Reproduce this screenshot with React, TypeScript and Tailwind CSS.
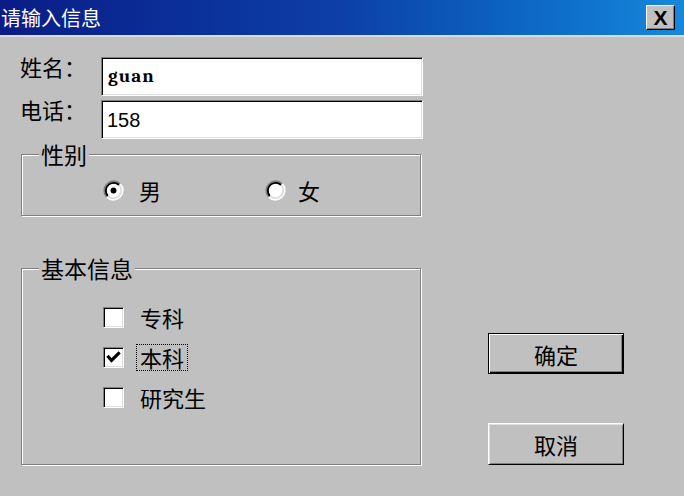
import React, { useState } from 'react';

const cjk = "font-[family-name:'Noto_Sans_CJK_SC','Noto_Sans',sans-serif]";

const sunken =
  'border border-t-[#808080] border-l-[#808080] border-b-white border-r-white shadow-[inset_1px_1px_0_#000,inset_-1px_-1px_0_#dfdfdf]';

const Radio: React.FC<{ checked: boolean }> = ({ checked }) => (
  <svg width="21" height="21" viewBox="0 0 20 20" className="shrink-0">
    <circle cx="10" cy="10" r="7" fill="#fff" />
    <path d="M3.64 16.36 A9 9 0 0 1 16.36 3.64" fill="none" stroke="#808080" strokeWidth="1.8" />
    <path d="M16.36 3.64 A9 9 0 0 1 3.64 16.36" fill="none" stroke="#fff" strokeWidth="1.8" />
    <path d="M4.7 15.3 A7.5 7.5 0 0 1 15.3 4.7" fill="none" stroke="#000" strokeWidth="1.8" />
    <path d="M15.3 4.7 A7.5 7.5 0 0 1 4.7 15.3" fill="none" stroke="#dfdfdf" strokeWidth="1.8" />
    {checked && <circle cx="10" cy="10" r="2.8" fill="#000" />}
  </svg>
);

const Check: React.FC<{ checked: boolean }> = ({ checked }) => (
  <div className={`w-[21px] h-[21px] bg-white shrink-0 flex items-center justify-center ${sunken}`}>
    {checked && (
      <svg width="15" height="15" viewBox="0 0 15 15">
        <path d="M2.5 7 L5.5 10.5 L12.5 3.5" fill="none" stroke="#000" strokeWidth="3.2" strokeLinecap="square" />
      </svg>
    )}
  </div>
);

const Group: React.FC<{ title: string; className: string; children: React.ReactNode }> = ({ title, className, children }) => (
  <div className={`relative ml-[1px] w-[400px] border border-[#808080] shadow-[1px_1px_0_#fff,inset_1px_1px_0_#fff] ${className}`}>
    <span className={`absolute -top-[14px] left-[17px] px-[2px] bg-[#c0c0c0] text-[23px] leading-[26px] text-black ${cjk}`}>
      {title}
    </span>
    {children}
  </div>
);

const App: React.FC = () => {
  const [sex, setSex] = useState<'m' | 'f'>('m');
  const [edu, setEdu] = useState({ zk: false, bk: true, yjs: false });

  const rows: { key: 'zk' | 'bk' | 'yjs'; label: string }[] = [
    { key: 'zk', label: '专科' },
    { key: 'bk', label: '本科' },
    { key: 'yjs', label: '研究生' },
  ];

  return (
    <div className="w-[684px] h-[496px] bg-[#c0c0c0] overflow-hidden text-black">
      {/* title bar */}
      <div className="h-[35px] flex items-center justify-between pl-[1px] pr-[9px] bg-gradient-to-r from-[#0a1c86] via-[#0d3fa8] to-[#1688dc]">
        <span className={`text-white text-[20px] leading-[24px] ${cjk}`}>请输入信息</span>
        <button className="w-[29px] h-[25px] bg-[#c0c0c0] flex items-center justify-center border border-t-white border-l-white border-b-black border-r-black shadow-[inset_-1px_-1px_0_#808080] font-[family-name:'Liberation_Sans',sans-serif] font-bold text-[21px] leading-none">
          X
        </button>
      </div>

      <div className="flex pl-[20px] border-t-2 border-[#dcdcdc]">
        {/* left column */}
        <div className="w-[403px] flex flex-col">
          <div className="mt-[20px] flex items-start">
            <span className={`w-[81px] -mt-[3px] text-[22px] leading-[24px] ${cjk}`}>姓名：</span>
            <div className={`w-[322px] h-[39px] bg-white flex items-center pl-[6px] ${sunken}`}>
              <span className="font-serif text-[19px] font-bold leading-none tracking-[1px]">guan</span>
            </div>
          </div>
          <div className="mt-[4px] flex items-start">
            <span className={`w-[81px] -mt-[3px] text-[22px] leading-[24px] ${cjk}`}>电话：</span>
            <div className={`w-[322px] h-[39px] bg-white flex items-center pl-[5px] ${sunken}`}>
              <span className="font-[family-name:'Liberation_Sans',sans-serif] text-[20px] leading-none">158</span>
            </div>
          </div>

          <Group title="性别" className="mt-[15px] h-[62px] pt-[25px] pl-[81px]">
            <div className="h-[20px] flex items-center">
              <label className="w-[162px] flex items-center gap-[15px] cursor-default" onClick={() => setSex('m')}>
                <Radio checked={sex === 'm'} />
                <span className={`text-[22px] leading-[24px] ${cjk}`}>男</span>
              </label>
              <label className="flex items-center gap-[12px] cursor-default" onClick={() => setSex('f')}>
                <Radio checked={sex === 'f'} />
                <span className={`text-[22px] leading-[24px] ${cjk}`}>女</span>
              </label>
            </div>
          </Group>

          <Group title="基本信息" className="mt-[52px] h-[197px] pt-[28px] pl-[81px]">
            {rows.map((r) => (
              <div
                key={r.key}
                className="h-[40px] flex items-center cursor-default"
                onClick={() => setEdu({ ...edu, [r.key]: !edu[r.key] })}
              >
                <Check checked={edu[r.key]} />
                <span
                  className={`ml-[12px] px-[3px] text-[22px] leading-[25px] border border-dotted ${
                    r.key === 'bk' ? 'border-black' : 'border-transparent'
                  } ${cjk}`}
                >
                  {r.label}
                </span>
              </div>
            ))}
          </Group>
        </div>

        {/* right column */}
        <div className="ml-[65px] w-[136px] flex flex-col justify-end gap-[49px]">
          <button
            className={`h-[41px] w-full border border-black shadow-[inset_1px_1px_0_#fff,inset_-1px_-1px_0_#000,inset_-2px_-2px_0_#808080] text-[22px] leading-none ${cjk}`}
          >
            确定
          </button>
          <button
            className={`h-[42px] w-full border border-t-white border-l-white border-b-black border-r-black shadow-[inset_1px_1px_0_#dfdfdf,inset_-1px_-1px_0_#808080] text-[22px] leading-none ${cjk}`}
          >
            取消
          </button>
        </div>
      </div>
    </div>
  );
};

export default App;
